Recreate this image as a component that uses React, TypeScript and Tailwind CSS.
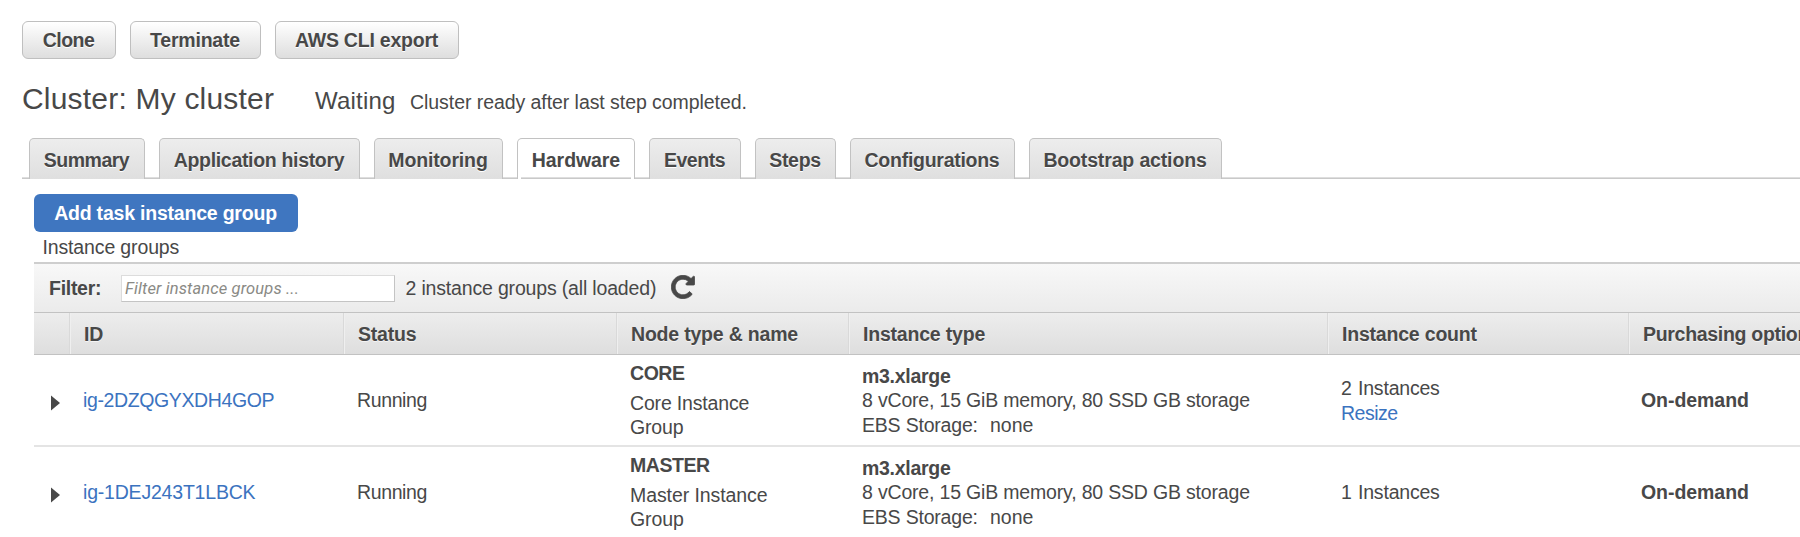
import type { ReactNode } from 'react';

const tabs: { label: string; box: string; text: string }[] = [
  { label: 'Summary', box: 'w-[116px]', text: 'tracking-[-0.5px]' },
  { label: 'Application history', box: 'w-[201px]', text: 'tracking-[-0.32px]' },
  { label: 'Monitoring', box: 'w-[129px]', text: 'tracking-[-0.14px]' },
  { label: 'Hardware', box: 'w-[118px]', text: 'tracking-[-0.07px]' },
  { label: 'Events', box: 'w-[92px]', text: 'tracking-[-0.45px]' },
  { label: 'Steps', box: 'w-[81px]', text: 'tracking-[-0.3px]' },
  { label: 'Configurations', box: 'w-[165px]', text: 'tracking-[-0.27px]' },
  { label: 'Bootstrap actions', box: 'w-[193px]', text: 'tracking-[-0.15px]' },
];

const groups = [
  { id: 'ig-2DZQGYXDH4GOP', kind: 'CORE', name: 'Core Instance Group', count: 2, resizable: true },
  { id: 'ig-1DEJ243T1LBCK', kind: 'MASTER', name: 'Master Instance Group', count: 1, resizable: false },
];

const columns = 'grid grid-cols-[35px_274px_273px_232px_479px_301px_252px]';

function ActionButton({ width, children }: { width: string; children: ReactNode }) {
  return (
    <button
      className={`${width} h-[38px] shrink-0 rounded-[6px] border border-[#bfbfbf] bg-linear-to-b from-white to-[#dedede] pr-px text-center font-bold tracking-[-0.22px] [text-shadow:0_1px_0_#fff]`}
    >
      {children}
    </button>
  );
}

function HeaderCell({ children }: { children: ReactNode }) {
  return (
    <div className="flex items-center border-l border-[#d9d9d9] pt-px pl-[14px] whitespace-nowrap shadow-[inset_1px_0_0_#efefef] [text-shadow:0_1px_0_#f4f4f4]">
      {children}
    </div>
  );
}

export default function App() {
  return (
    <div className="h-[537px] w-[1800px] overflow-hidden bg-white pt-[21px] font-['Liberation_Sans',Arial,sans-serif] text-[19.5px] leading-[24.5px] tracking-[-0.2px] text-[#484848]">
      <div className="flex gap-[14px] pl-[22px]">
        <ActionButton width="w-[94px]">
          <span className="tracking-[-0.55px]">Clone</span>
        </ActionButton>
        <ActionButton width="w-[131px]">Terminate</ActionButton>
        <ActionButton width="w-[184px]">AWS CLI export</ActionButton>
      </div>

      <div className="mt-[18px] flex h-[43px] items-baseline pl-[22px]">
        <h1 className="w-[293px] text-[30px] leading-[44px] tracking-[0.2px]">Cluster: My cluster</h1>
        <span className="w-[95px] text-[24px] tracking-[0.2px]">Waiting</span>
        <span className="tracking-[-0.06px]">Cluster ready after last step completed.</span>
      </div>

      <nav className="mt-[18px] ml-[22px] flex h-[41px] gap-[14px] pl-[7px] shadow-[inset_0_-1px_0_#c9c9c9,inset_0_-2px_0_#dedede]">
        {tabs.map((tab) => (
          <a
            key={tab.label}
            className={`${tab.box} flex rounded-t-[5px] border border-b-0 border-[#c2c2c2] pt-[9px] font-bold [text-shadow:0_1px_0_#fff] ${
              tab.label === 'Hardware'
                ? 'flex-col items-center bg-white px-[3px]'
                : 'justify-center bg-linear-to-b from-[#ededed] to-[#dfdfdf] pr-px'
            }`}
          >
            <span className={tab.text}>{tab.label}</span>
            {tab.label === 'Hardware' && <span className="mt-auto h-[2px] w-full border-b border-[#c9c9c9] bg-[#dedede]" />}
          </a>
        ))}
      </nav>

      <main className="pt-[15px] pl-[34px]">
        <button className="block h-[38px] w-[264px] rounded-[6px] bg-[#3f76c0] pt-px pr-px text-center font-bold tracking-[-0.21px] text-white">
          Add task instance group
        </button>
        <div className="h-[30px] pl-[8.5px] leading-[30px] tracking-[-0.14px]">Instance groups</div>

        <div className="flex h-[50px] items-center border-t-2 border-[#cecece] bg-linear-to-b from-[#f8f8f8] to-[#ebebeb] pl-[15px]">
          <label className="w-[72px] tracking-[-0.28px] font-bold">Filter:</label>
          <input
            className="h-[27px] w-[274px] border border-[#dcdcdc] border-r-[#c4c4c4] border-b-[#c4c4c4] bg-white pt-px pl-[3px] font-[Roboto,sans-serif] text-[16.5px] tracking-[0.13px] italic placeholder:text-[#8a8a85] placeholder:opacity-100"
            placeholder="Filter instance groups ..."
          />
          <span className="pl-[10.5px] tracking-[-0.17px]">2 instance groups (all loaded)</span>
          <svg className="mb-[2px] ml-[15px] h-6 w-6" viewBox="108 108 1576 1576" fill="#484848" stroke="#484848" strokeWidth="50">
            <path d="M1664 256v448q0 26-19 45t-45 19h-448q-42 0-59-40-17-39 14-69l138-138q-148-137-349-137-104 0-198.500 40.500t-163.500 109.500-109.500 163.500-40.500 198.500 40.500 198.500 109.500 163.500 163.500 109.500 198.500 40.500q119 0 225-52t179-147q7-10 23-12 15 0 25 9l137 138q9 8 9.500 20.500t-7.500 22.500q-109 132-264 204.500t-327 72.500q-156 0-298-61t-245-164-164-245-61-298 61-298 164-245 245-164 298-61q147 0 284.500 55.500t244.500 156.500l130-129q29-31 70-14 39 17 39 59z" />
          </svg>
        </div>

        <div className={`${columns} h-[43px] w-[1846px] border-y border-[#c2c2c2] bg-linear-to-b from-[#ededed] to-[#dedede] font-bold`}>
          <div />
          <HeaderCell>ID</HeaderCell>
          <HeaderCell>Status</HeaderCell>
          <HeaderCell>Node type &amp; name</HeaderCell>
          <HeaderCell>Instance type</HeaderCell>
          <HeaderCell>Instance count</HeaderCell>
          <HeaderCell>
            <span className="tracking-[-0.3px]">Purchasing option</span>
          </HeaderCell>
        </div>

        {groups.map((group) => (
          <div key={group.id} className={`${columns} h-[92px] w-[1846px] items-center border-b-2 border-[#e4e4e4]`}>
            <svg className="mt-[5px] ml-[17px] h-[16px] w-[9px]" viewBox="0 0 9 16" fill="#484848">
              <path d="M0 0.500 9 8 0 15.500z" />
            </svg>
            <a className={`pt-px pl-[14px] text-[#3b73bf] ${group.resizable ? 'tracking-[-0.38px]' : 'tracking-[-0.2px]'}`}>{group.id}</a>
            <div className="pt-px pl-[14px] tracking-[-0.38px]">Running</div>
            <div className="w-[180px] pt-px pl-[14px]">
              <div className="mb-[5px] font-bold tracking-[-0.45px]">{group.kind}</div>
              <div className={group.resizable ? 'tracking-[-0.17px]' : 'tracking-[-0.08px]'}>{group.name}</div>
            </div>
            <div className="pt-px pl-[14px]">
              <div className="font-bold tracking-[-0.28px]">m3.xlarge</div>
              <div className="tracking-[-0.18px]">8 vCore, 15 GiB memory, 80 SSD GB storage</div>
              <div className="flex">
                <span className="w-[128px]">EBS Storage:</span>
                <span className="tracking-normal">none</span>
              </div>
            </div>
            <div className="pt-px pl-[14px]">
              <div className="flex">
                <span className="w-[17px]">{group.count}</span>
                <span>Instances</span>
              </div>
              {group.resizable && <a className="block tracking-[-0.5px] text-[#3b73bf]">Resize</a>}
            </div>
            <div className="pt-px pl-[13px] font-bold tracking-[-0.05px]">On-demand</div>
          </div>
        ))}
      </main>
    </div>
  );
}
